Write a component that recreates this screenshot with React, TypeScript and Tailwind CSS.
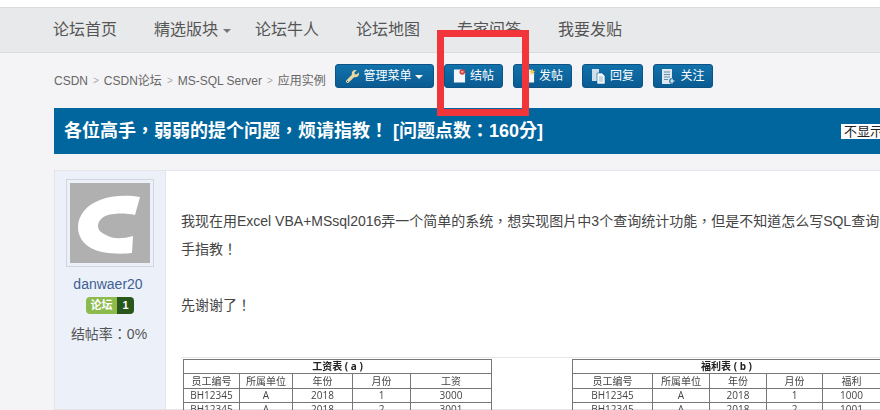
import type { ReactNode } from "react";
import { FaWrench } from "react-icons/fa";

const navItems = ["论坛首页", "精选版块", "论坛牛人", "论坛地图", "专家问答", "我要发贴"];

function DocIcon({ kind }: { kind: "close" | "post" | "reply" | "follow" }) {
  if (kind === "reply") {
    return (
      <svg width="15" height="17" viewBox="0 0 15 17" className="shrink-0">
        <path d="M1 1h7v12H1z" fill="#cfe0ec" />
        <path d="M6 5h5l3 3v8H6z" fill="#f4f8fb" stroke="#0b5f95" strokeWidth="0.6" />
        <path d="M8 9h4M8 11h4M8 13h4" stroke="#7fa6c2" strokeWidth="0.8" />
      </svg>
    );
  }
  if (kind === "follow") {
    return (
      <svg width="15" height="17" viewBox="0 0 15 17" className="shrink-0">
        <path d="M1 1h10v15H1z" fill="#dfe8ef" />
        <path d="M3 4h6M3 6.5h6M3 9h6M3 11.5h4" stroke="#5f8db0" strokeWidth="1" />
        <path d="M11 10v6M8 13h6" stroke="#0b5f95" strokeWidth="3" />
        <path d="M11 10.5v5M8.5 13h5" stroke="#fff" strokeWidth="1.2" />
      </svg>
    );
  }
  return (
    <svg width="13" height="16" viewBox="0 0 14 16" className="shrink-0">
      <path d="M1 1h8l4 4v10H1z" fill="#f3f7fb" />
      {kind === "close" ? (
        <>
          <circle cx="10" cy="3.6" r="3" fill="#d8433c" />
          <path d="M8.6 3.6h2.8" stroke="#fff" strokeWidth="1" />
        </>
      ) : (
        <path d="M11 0l1 2.4 2 .6-1.6 1.4.4 2.2-1.8-1.2-1.8 1.2.4-2.2L8 3l2-.6z" fill="#f2cf4f" />
      )}
    </svg>
  );
}

function ActionButton({ icon, label, className }: { icon: ReactNode; label: ReactNode; className: string }) {
  return (
    <button
      className={`flex h-6 items-center justify-center gap-[4px] rounded-[3px] border border-[#0a5384] bg-gradient-to-b from-[#1272ab] to-[#0a5b92] text-xs text-white ${className}`}
    >
      {icon}
      {label}
    </button>
  );
}

function SheetTable({ title, last, values, cols }: { title: string; last: string; values: string[]; cols: number[] }) {
  return (
    <table className="table-fixed border-collapse border border-[#777] text-center text-[10px] leading-[13px] text-[#444] font-['Open_Sans','Noto_Sans_CJK_SC',sans-serif]">
      <colgroup>
        {cols.map((w, i) => (
          <col key={i} style={{ width: w }} />
        ))}
      </colgroup>
      <tbody>
        <tr className="h-[14px]">
          <td colSpan={5} className="border border-[#777] font-bold text-[#222]">
            {title}
          </td>
        </tr>
        <tr className="h-[15px]">
          {["员工编号", "所属单位", "年份", "月份", last].map((h) => (
            <td key={h} className="border border-[#777]">
              {h}
            </td>
          ))}
        </tr>
        {values.map((v, i) => (
          <tr key={v} className="h-[14px]">
            <td className="border border-[#777]">BH12345</td>
            <td className="border border-[#777]">A</td>
            <td className="border border-[#777]">2018</td>
            <td className="border border-[#777]">{i + 1}</td>
            <td className="border border-[#777]">{v}</td>
          </tr>
        ))}
      </tbody>
    </table>
  );
}

export default function App() {
  return (
    <div className="relative h-[410px] w-[880px] overflow-hidden bg-[#f4f4f6] font-['Liberation_Sans','Noto_Sans_CJK_TC',sans-serif]">
      <div className="w-[1100px]">
        <div className="h-[7px] bg-white" />
        <nav className="flex h-[46px] items-center border-y border-[#dcdcdc] bg-[#e8e9eb] pl-[53px] text-base text-[#555]">
          {navItems.map((item, i) => (
            <a key={item} className="flex w-[101px] items-center gap-[5px]">
              {item}
              {i === 1 && <span className="mt-[2px] border-x-[4px] border-t-[4px] border-x-transparent border-t-[#777]" />}
            </a>
          ))}
        </nav>

        <div className="flex h-[55px] items-start pl-[54px] pt-[11px]">
          <div className="mt-[8px] flex w-[281px] items-center gap-[5px] text-xs leading-[18px] text-[#666]">
            <span>CSDN</span>
            <span className="text-[10px] text-[#aaa]">&gt;</span>
            <span>CSDN论坛</span>
            <span className="text-[10px] text-[#aaa]">&gt;</span>
            <span>MS-SQL Server</span>
            <span className="text-[10px] text-[#aaa]">&gt;</span>
            <span>应用实例</span>
          </div>
          <div className="flex gap-[10px]">
            <ActionButton
              className="w-[99px]"
              icon={<FaWrench className="size-[13px] text-[#efd9a0]" />}
              label={
                <span className="flex items-center gap-[3px]">
                  管理菜单
                  <span className="mt-[2px] border-x-[4px] border-t-[4px] border-x-transparent border-t-white" />
                </span>
              }
            />
            <ActionButton className="w-[59px]" icon={<DocIcon kind="close" />} label="结帖" />
            <ActionButton className="w-[59px]" icon={<DocIcon kind="post" />} label="发帖" />
            <ActionButton className="w-[61px]" icon={<DocIcon kind="reply" />} label="回复" />
            <ActionButton className="w-[60px]" icon={<DocIcon kind="follow" />} label="关注" />
          </div>
        </div>

        <div className="ml-[54px] flex h-[46px] items-center bg-[#01669e] pl-[10px] text-white">
          <h1 className="w-[777px] text-lg font-bold">各位高手，弱弱的提个问题，烦请指教！ [问题点数：160分]</h1>
          <button className="h-[15px] w-[60px] bg-white pl-[3px] text-left text-[13px] leading-[15px] text-[#222]">不显示</button>
        </div>

        <div className="ml-[54px] mt-4 flex h-[240px] border border-[#e3e5e9] bg-white">
          <aside className="flex w-[111px] shrink-0 flex-col items-center border-r border-[#e3e5e9] bg-[#ecf1f9] pt-2">
            <div className="border border-[#cfd6de] p-[3px]">
              <svg width="80" height="80" viewBox="0 0 80 80" className="block bg-[#b0b0b0]">
                <path
                  d="M70 14C58 12 42 12 30 17C16 22 8 33 8 44C8 56 17 66 32 69C42 71 54 71 62 70L63 53C52 56 44 56 38 53C31 50 28 47 28 43C28 38 32 34 38 32C46 30 56 30 65 32Z"
                  fill="#fff"
                />
              </svg>
            </div>
            <div className="mt-[7px] pr-[4px] text-sm leading-5 text-[#3f5f95]">danwaer20</div>
            <div className="mt-[3px] flex h-[17px] w-12 items-center overflow-hidden rounded-sm text-[11px] font-bold text-white">
              <span className="flex h-full w-[31px] items-center justify-center bg-[#8cba4c]">论坛</span>
              <span className="flex h-full flex-1 items-center justify-center bg-[#29561b]">1</span>
            </div>
            <div className="mt-[10px] pr-[2px] text-sm leading-5 text-[#555]">结帖率：0%</div>
          </aside>

          <div className="min-w-0 flex-1 pl-[15px]">
            <div className="whitespace-nowrap pt-9 text-sm leading-7 text-[#444]">
              <p>我现在用Excel VBA+MSsql2016弄一个简单的系统，想实现图片中3个查询统计功能，但是不知道怎么写SQL查询语句，请高</p>
              <p>手指教！</p>
              <p className="mt-7">先谢谢了！</p>
            </div>
            <div className="mt-[38px] flex items-start gap-[80px] border-t border-[#e6e6e6] pl-[2px] pt-[1px] blur-[0.3px]">
              <SheetTable title="工资表 ( a )" last="工资" values={["3000", "3001"]} cols={[56, 53, 60, 58, 81]} />
              <SheetTable title="福利表 ( b )" last="福利" values={["1000", "1001"]} cols={[80, 57, 57, 56, 58]} />
            </div>
          </div>
        </div>
      </div>

      {/* 截图上手工画的红框 */}
      <div className="absolute left-[437px] top-[30px] h-[86px] w-[92px] border-[7px] border-[#f1353a]" />
    </div>
  );
}
